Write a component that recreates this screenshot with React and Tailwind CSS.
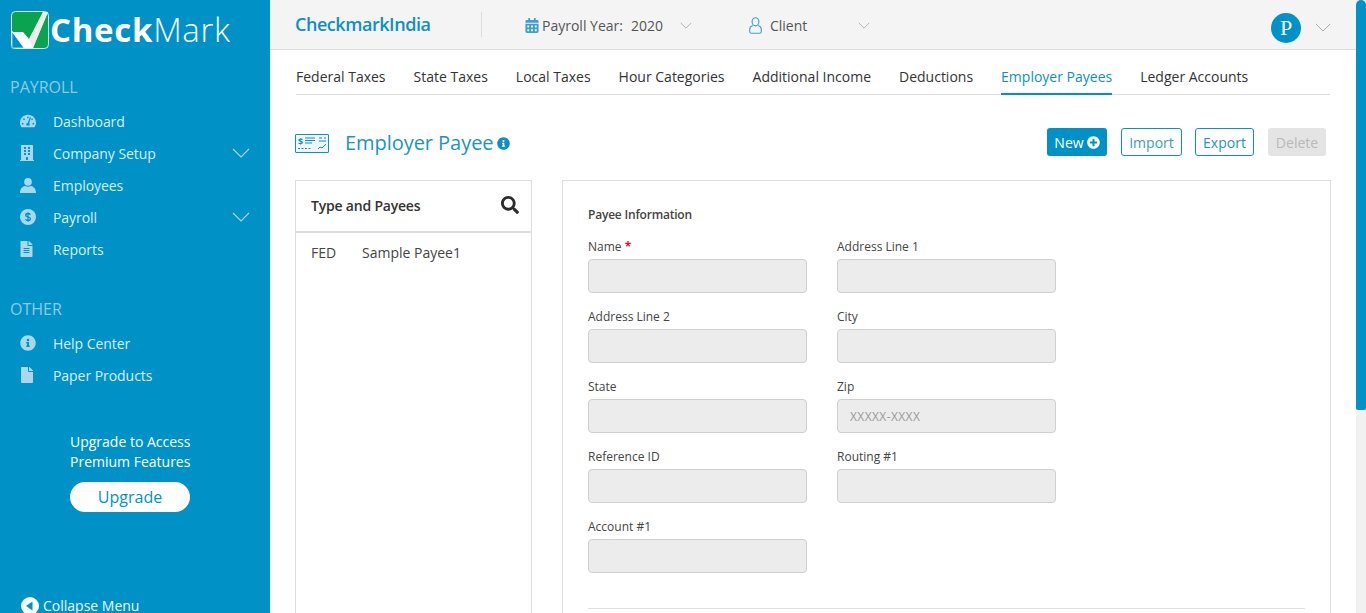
import React from 'react';
import { FaTachometerAlt, FaBuilding, FaInfoCircle, FaFile, FaCalendarAlt, FaSearch, FaPlusCircle, FaFileAlt } from 'react-icons/fa';

const Chevron = ({ className }) => (
  <svg viewBox="0 0 18 10" className={className} fill="none" stroke="currentColor" strokeWidth="1.1">
    <polyline points="1,1 9,9 17,1" />
  </svg>
);

const DollarCircle = ({ className }) => (
  <svg viewBox="0 0 16 16" className={className}>
    <circle cx="8" cy="8" r="8" fill="currentColor" />
    <path d="M10.4 5.6C10 4.8 9 4.5 8 4.5c-1.2 0-2.3.5-2.3 1.7 0 2.300 4.700 1.200 4.700 3.600 0 1.200-1.100 1.700-2.400 1.700-1.100 0-2.100-.4-2.500-1.300M8 3.300v9.400" fill="none" stroke="#0092c7" strokeWidth="1.300" />
  </svg>
);

const UserOutline = ({ className }) => (
  <svg viewBox="0 0 13 17" className={className} fill="none" stroke="currentColor" strokeWidth="1.100">
    <ellipse cx="6.500" cy="4.800" rx="3.400" ry="4.100" />
    <path d="M3.800 8.500C2 9 .7 10.300.7 12.500v2c0 1 .7 1.800 1.700 1.800h8.200c1 0 1.700-.8 1.700-1.800v-2c0-2.200-1.300-3.500-3.100-4" />
  </svg>
);

const UserSolid = ({ className }) => (
  <svg viewBox="0 0 16 15" className={className} fill="currentColor">
    <circle cx="8" cy="3.900" r="3.800" />
    <path d="M0 15c0-4 2-6.500 5-7 1.800 1 4.200 1 6 0 3 .5 5 3 5 7z" />
  </svg>
);

const Logo = () => (
  <svg viewBox="0 0 38 38" className="w-[38px] h-[38px] shrink-0">
    <rect x="0.500" y="0.500" width="37" height="37" rx="4" fill="#0aa350" stroke="#d7efe2" />
    <path d="M1 20 L13 37 L1 37 Z" fill="#0092c7" stroke="#fff" strokeWidth="0.600" />
    <path d="M1 21 L12 21 L18 28 L32 1 L37 1 L22 37 L13 37 Z" fill="#fff" />
    <path d="M18 28 L32 1 L37 1 L22 37 Z" fill="#e6e6e6" opacity="0.700" />
  </svg>
);

const CheckIcon = ({ className }) => (
  <svg viewBox="0 0 34 19" className={className} fill="none" stroke="currentColor">
    <rect x="0.500" y="0.500" width="33" height="18" rx="0.500" fill="#eef8fc" />
    <text x="3" y="11" fontSize="9" fontWeight="700" fill="currentColor" stroke="none" fontFamily="'Open Sans', sans-serif">$</text>
    <path d="M10 4h10M10 6.500h10M10 9h7M24 4h3M29 4h2M24 7h7" strokeWidth="1" />
    <path d="M3 14.500h14" strokeWidth="1" strokeDasharray="2 1.500" />
    <path d="M23 15l2-2 2 1 4-4" strokeWidth="1" />
  </svg>
);

const MENU_PAYROLL = [
  { label: 'Dashboard', icon: <FaTachometerAlt className="w-4 h-4" /> },
  { label: 'Company Setup', icon: <FaBuilding className="w-[14px] h-4" />, more: true },
  { label: 'Employees', icon: <UserSolid className="w-4 h-[15px]" /> },
  { label: 'Payroll', icon: <DollarCircle className="w-4 h-4" />, more: true },
  { label: 'Reports', icon: <FaFileAlt className="w-[13px] h-4" /> },
];

const MENU_OTHER = [
  { label: 'Help Center', icon: <FaInfoCircle className="w-4 h-4" /> },
  { label: 'Paper Products', icon: <FaFile className="w-[14px] h-4" /> },
];

const TABS = ['Federal Taxes', 'State Taxes', 'Local Taxes', 'Hour Categories', 'Additional Income', 'Deductions', 'Employer Payees', 'Ledger Accounts'];

const FIELDS = [
  [{ label: 'Name', required: true }, { label: 'Address Line 1' }],
  [{ label: 'Address Line 2' }, { label: 'City' }],
  [{ label: 'State' }, { label: 'Zip', placeholder: 'XXXXX-XXXX' }],
  [{ label: 'Reference ID' }, { label: 'Routing #1' }],
  [{ label: 'Account #1' }],
];

function MenuItem({ item }) {
  return (
    <div className="flex items-center h-8 pl-5 pr-[20px] text-[14px] text-[#d9eef8]">
      <span className="w-[33px] flex justify-start text-[#a9d8ec]">{item.icon}</span>
      <span className="flex-1 tracking-[-0.05px]">{item.label}</span>
      {item.more && <Chevron className="w-[18px] h-[10px] text-[#a9d8ec]" />}
    </div>
  );
}

function Field({ field }) {
  return (
    <div className="w-[219px] h-[70px]">
      <label className="block h-[24px] pt-[3px] text-[12px] leading-[18px] text-[#444]">
        {field.label}
        {field.required && <span className="text-[#e8112d] font-bold"> *</span>}
      </label>
      <input
        disabled
        placeholder={field.placeholder}
        className="block w-full h-[34px] px-3 rounded-[4px] bg-[#ececec] border border-[#cfcfcf] text-[12px] tracking-[0.4px] placeholder:text-[#9a9a9a]"
      />
    </div>
  );
}

export default function App() {
  return (
    <div className="flex h-[613px] overflow-hidden bg-white font-['Open_Sans',sans-serif]">
      {/* Sidebar */}
      <aside className="w-[270px] shrink-0 bg-[#0092c7] flex flex-col">
        <div className="flex items-center gap-[1px] pl-[11px] pt-[11px] h-[49px]">
          <Logo />
          <span className="text-[33px] leading-[38px] text-white tracking-[0.7px]">
            <span className="font-bold">Check</span>
            <span className="font-light">Mark</span>
          </span>
        </div>

        <div className="pl-[10px] mt-[27px] h-[22px] text-[16px] leading-[22px] text-[#8ccbe6]">PAYROLL</div>
        <nav className="mt-[7px]">
          {MENU_PAYROLL.map((item) => <MenuItem key={item.label} item={item} />)}
        </nav>

        <div className="pl-[10px] mt-[33px] h-[22px] text-[16px] leading-[22px] text-[#8ccbe6]">OTHER</div>
        <nav className="mt-[7px]">
          {MENU_OTHER.map((item) => <MenuItem key={item.label} item={item} />)}
        </nav>

        <div className="pl-[70px] mt-[41px] text-[14px] leading-[20px] text-white">
          <p>Upgrade to Access</p>
          <p>Premium Features</p>
          <button className="mt-[10px] w-[120px] h-[30px] rounded-full bg-white text-[#0092c7] text-[16px] leading-[30px]">Upgrade</button>
        </div>

        <div className="flex items-center gap-[4px] pl-[21px] mt-[84px] text-[14px] leading-[20px] text-[#eaf6fb]">
          <svg viewBox="0 0 18 18" className="w-[18px] h-[18px]">
            <circle cx="9" cy="9" r="9" fill="#fff" />
            <path d="M11.500 4.500v9L5 9z" fill="#0092c7" />
          </svg>
          <span>Collapse Menu</span>
        </div>
      </aside>

      {/* Main */}
      <main className="flex-1 min-w-0 flex flex-col">
        <header className="h-[50px] shrink-0 bg-[#f4f4f4] border-b border-[#dcdcdc] flex items-center pl-[25px] pr-[25px]">
          <span className="w-[186px] text-[18px] font-semibold text-[#0f8fc3] tracking-[-0.45px]">CheckmarkIndia</span>
          <span className="w-px h-[25px] bg-[#dddddd]" />
          <div className="flex items-center ml-[43px] mt-[2px] text-[14px] text-[#555]">
            <FaCalendarAlt className="w-[14px] h-[15px] text-[#3f9fca] mr-[3px]" />
            <span>Payroll Year:</span>
            <span className="ml-2">2020</span>
            <Chevron className="w-[12px] h-[7px] ml-[17px] text-[#999]" />
          </div>
          <div className="flex items-center ml-[57px] mt-[2px] text-[14px] text-[#555]">
            <UserOutline className="w-[13px] h-[17px] text-[#3f9fca] mr-[8px]" />
            <span>Client</span>
            <Chevron className="w-[12px] h-[7px] ml-[51px] text-[#999]" />
          </div>
          <div className="ml-auto mt-[6px] flex items-center gap-[14px]">
            <span className="w-[30px] h-[30px] rounded-full bg-[#0092c7] flex items-center justify-center text-white text-[22px] leading-none font-['Liberation_Serif',serif]">P</span>
            <Chevron className="w-[16px] h-[9px] text-[#aaa]" />
          </div>
        </header>

        <div className="px-[26px] flex-1 min-h-0">
          <div className="flex gap-[28px] h-[45px] border-b border-[#dddddd]">
            {TABS.map((tab) => (
              <span
                key={tab}
                className={`h-[45px] pt-[16px] text-[14px] leading-[22px] font-medium ${tab === 'Employer Payees' ? 'text-[#0f8fc3] border-b-2 border-[#0092c7]' : 'text-[#333]'}`}
              >
                {tab}
              </span>
            ))}
          </div>

          <div className="flex items-center h-[34px] mt-[30px]">
            <div className="flex items-center mt-[2px]">
              <CheckIcon className="-ml-px w-[34px] h-[19px] mr-[16px] text-[#0f8fc3]" />
              <h1 className="text-[20px] leading-[28px] tracking-[-0.05px] text-[#1b94c4]">Employer Payee</h1>
              <FaInfoCircle className="w-[13px] h-[13px] ml-[3px] text-[#0f8fc3]" />
            </div>
            <div className="ml-auto flex items-center text-[14px]">
              <button className="flex items-center justify-center gap-[3px] w-[60px] h-[28px] rounded-[3px] bg-[#0092c7] text-white">
                New <FaPlusCircle className="w-[13px] h-[13px]" />
              </button>
              <button className="ml-[14px] w-[61px] h-[28px] rounded-[3px] border border-[#0f8fc3] text-[#3a9cc6]">Import</button>
              <button className="ml-[13px] w-[59px] h-[28px] rounded-[3px] border border-[#0f8fc3] text-[#1f94c4]">Export</button>
              <button className="ml-[14px] mr-[4px] w-[58px] h-[28px] rounded-[3px] bg-[#e4e4e4] text-[#b9b9b9]">Delete</button>
            </div>
          </div>

          <div className="flex gap-[30px] mt-[21px] -mx-px">
            {/* Payee list */}
            <section className="w-[237px] h-[500px] shrink-0 border border-[#dddddd]">
              <div className="flex items-center justify-between h-[52px] pl-[15px] pr-[12px] pb-[2px] border-b-2 border-[#dddddd]">
                <span className="text-[14px] font-semibold tracking-[-0.2px] text-[#333]">Type and Payees</span>
                <FaSearch className="w-[18px] h-[18px] text-[#2b2b2b]" />
              </div>
              <div className="flex pl-[15px] pt-[10px] text-[14px] leading-[20px] text-[#444]">
                <span className="w-[51px]">FED</span>
                <span>Sample Payee1</span>
              </div>
            </section>

            {/* Payee form */}
            <section className="flex-1 h-[500px] border border-[#dddddd] px-[25px] pt-[25px]">
              <h2 className="h-[26px] text-[12px] leading-[18px] font-semibold tracking-[-0.2px] text-[#444]">Payee Information</h2>
              <div className="mt-[3px]">
                {FIELDS.map((row, i) => (
                  <div key={i} className="flex gap-[30px]">
                    {row.map((field) => <Field key={field.label} field={field} />)}
                  </div>
                ))}
              </div>
              <div className="mt-[23px] border-t border-[#dddddd]" />
            </section>
          </div>
        </div>
      </main>

      {/* Scrollbar */}
      <div className="w-[10px] shrink-0 bg-[#f1f1f1]">
        <div className="h-[410px] rounded-t-[5px] rounded-b-[2px] bg-[#0092c7]" />
      </div>
    </div>
  );
}
